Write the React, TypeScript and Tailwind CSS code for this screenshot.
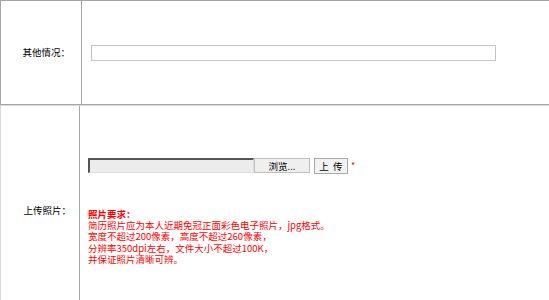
const cjk = { fontFamily: '"SimSun", "Noto Sans CJK SC", "Liberation Sans", sans-serif' };

function OtherRow() {
  return (
    <div className="flex h-[105px] border-t border-l border-b border-[#a6a6a6]">
      <div className="flex w-[81px] shrink-0 items-center justify-end border-r border-[#a6a6a6] pr-[11px]">
        <span className="text-[9.5px] text-black">其他情况：</span>
      </div>
      <div className="flex flex-1 items-center pl-[9px]">
        <input
          type="text"
          className="h-[16px] w-[405px] border border-[#c4c4c4] bg-white outline-none"
        />
      </div>
    </div>
  );
}

function PhotoRow() {
  return (
    <div className="flex h-[210px] border-l border-t border-[#d8d8d8]">
      <div className="flex w-[79px] shrink-0 items-center justify-end border-r border-[#a6a6a6] pr-[8px]">
        <span className="text-[9.5px] text-black">上传照片：</span>
      </div>
      <div className="flex flex-1 flex-col justify-center pl-[8px] pt-[2px]">
        <div className="flex items-center">
          <div className="h-[15px] w-[166px] border-l-2 border-t-2 border-r border-b border-l-[#555] border-t-[#555] border-r-[#ddd] border-b-[#ddd] bg-[#ececec]" />
          <button className="flex h-[15px] w-[56px] items-center justify-center border border-[#bdbdbd] bg-[#efefef] text-[9.5px] text-black">
            浏览...
          </button>
          <button className="ml-[4px] flex h-[16px] w-[34px] items-center justify-center border border-[#a9a9a9] bg-[#f2f2f2] text-[9.5px] text-black">
            上&nbsp;&nbsp;传
          </button>
          <span className="ml-[3px] text-[9px] text-[#ff0000]">*</span>
        </div>
        <div className="mt-[35px] text-[9.5px] leading-[11.3px] text-[#ff0000]">
          <div className="font-bold">照片要求：</div>
          <div>简历照片应为本人近期免冠正面彩色电子照片，jpg格式。</div>
          <div>宽度不超过200像素，高度不超过260像素，</div>
          <div>分辨率350dpi左右，文件大小不超过100K，</div>
          <div>并保证照片清晰可辨。</div>
        </div>
      </div>
    </div>
  );
}

export default function App() {
  return (
    <div className="h-[300px] w-[549px] overflow-hidden bg-white" style={cjk}>
      <OtherRow />
      <PhotoRow />
    </div>
  );
}
